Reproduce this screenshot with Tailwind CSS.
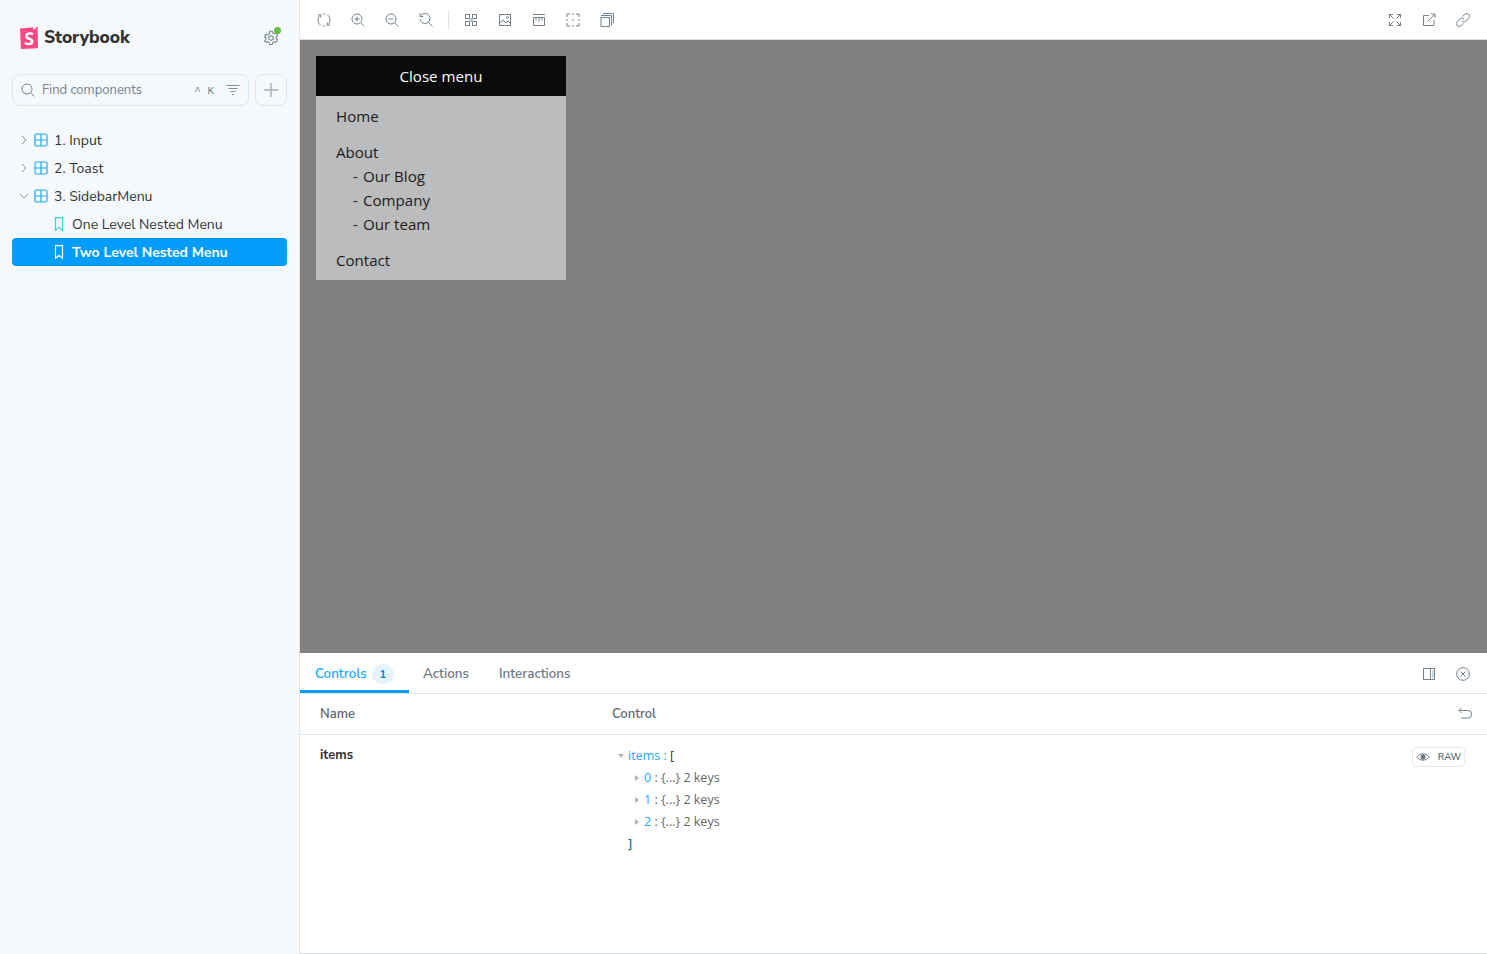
<!DOCTYPE html>
<html lang="en">
<head>
    <meta charset="UTF-8">
    <meta name="viewport" content="width=device-width, initial-scale=1.0">
    <title>Storybook</title>
    <script src="https://cdn.jsdelivr.net/npm/@tailwindcss/browser@4"></script>
</head>
<body class="bg-white">
<div class="flex h-[954px] w-[1487px] overflow-hidden font-['Nunito_Sans','Noto_Sans',sans-serif] text-[13px] text-[#2e3438]">

    <!-- sidebar -->
    <aside class="w-[300px] shrink-0 border-r border-[#e3e8ee] bg-[#f6f9fc] px-3">
        <div class="flex h-[74px] items-center pl-2 pr-1 pt-[1px]">
            <svg class="h-[22px] w-[18px]" viewBox="0 0 18 22"><path fill="#ff4785" d="M0 1.400 17.600 0 18 21.200 0.900 22Z"/><path fill="#fff" d="M13.200 0.200 15.600 0 15.700 2.700 14.400 1.800 13.200 2.800ZM12.700 8.200C12.300 7.900 11.400 7.600 10 7.600 8.600 7.600 7.900 8.200 7.900 9 7.900 11 13.600 10.300 13.600 14.600 13.600 17 11.600 18.300 9 18.300 6.600 18.300 5 17.400 4.400 16.800L5.300 14.700C5.800 15.200 7.400 16 8.800 16 10.100 16 10.800 15.400 10.800 14.600 10.800 12.600 5.100 13.200 5.100 9.200 5.100 6.800 7 5.300 9.700 5.300 11.500 5.300 12.800 5.700 13.400 6.200Z"/></svg>
            <span class="ml-[6px] text-[17.500px] font-extrabold tracking-[-0.1px] text-[#333]">Storybook</span>
            <div class="relative ml-auto mr-[4px]">
                <svg class="h-[16px] w-[16px] text-[#73828c]" viewBox="0 0 14 14" fill="none" stroke="currentColor" stroke-width=".9"><circle cx="7" cy="7" r="2"/><path d="M5.800 1h2.400l.4 1.600 1.300.7 1.600-.5 1.200 2.100-1.200 1.100v1.600l1.200 1.100-1.200 2.100-1.600-.5-1.300.7-.4 1.600H5.800l-.4-1.600-1.300-.7-1.600.5L1.300 9.700l1.200-1.100V7L1.300 5.900l1.200-2.100 1.600.5 1.300-.7z" stroke-linejoin="round"/></svg>
                <span class="absolute -right-[2px] -top-[3px] h-[7px] w-[7px] rounded-full bg-[#66bf3c]"></span>
            </div>
        </div>
        <div class="flex gap-[6px]">
            <div class="flex h-8 w-[237px] items-center rounded-lg border border-[#d9e8f2] pl-2 pr-[8px] text-[#73828c]">
                <svg class="h-[14px] w-[14px]" viewBox="0 0 14 14" fill="none" stroke="currentColor"><circle cx="6" cy="6" r="5"/><path d="m9.600 9.600 3.900 3.900"/></svg>
                <span class="ml-[7px] pt-[2px] text-[13px]">Find components</span>
                <span class="ml-auto pt-[2px] font-['Liberation_Mono',monospace] text-[11px]">^ K</span>
                <svg class="ml-3 h-[14px] w-[14px]" viewBox="0 0 14 14" fill="none" stroke="currentColor" stroke-width=".9"><path d="M.5 2.500h13M2.500 5.500h9M4.500 8.500h5M6 11.500h2"/></svg>
            </div>
            <div class="flex h-8 w-8 items-center justify-center rounded-lg border border-[#d9e8f2] text-[#a4adb3]">
                <svg class="h-[14px] w-[14px]" viewBox="0 0 14 14" fill="none" stroke="currentColor" stroke-width="1.300"><path d="M7 0v14M0 7h14"/></svg>
            </div>
        </div>
        <nav class="mt-5 text-[14px]">
            <div class="flex h-7 items-center pl-[7px]">
                <svg class="h-[10px] w-[10px] text-[#8a959c]" viewBox="0 0 10 10" fill="none" stroke="currentColor"><path d="m3 1 4 4-4 4"/></svg>
                <svg class="ml-[5px] h-[14px] w-[14px] text-[#1ea7fd]" viewBox="0 0 14 14" fill="none" stroke="currentColor" stroke-width="1.200"><rect x="1" y="1" width="12" height="12" rx="1.500"/><path d="M7 1v12M1 7h12"/></svg>
                <span class="ml-[6px] pt-[1px]">1. Input</span>
            </div>
            <div class="flex h-7 items-center pl-[7px]">
                <svg class="h-[10px] w-[10px] text-[#8a959c]" viewBox="0 0 10 10" fill="none" stroke="currentColor"><path d="m3 1 4 4-4 4"/></svg>
                <svg class="ml-[5px] h-[14px] w-[14px] text-[#1ea7fd]" viewBox="0 0 14 14" fill="none" stroke="currentColor" stroke-width="1.200"><rect x="1" y="1" width="12" height="12" rx="1.500"/><path d="M7 1v12M1 7h12"/></svg>
                <span class="ml-[6px] pt-[1px]">2. Toast</span>
            </div>
            <div class="flex h-7 items-center pl-[7px]">
                <svg class="h-[10px] w-[10px] text-[#8a959c]" viewBox="0 0 10 10" fill="none" stroke="currentColor"><path d="m1 3 4 4 4-4"/></svg>
                <svg class="ml-[5px] h-[14px] w-[14px] text-[#1ea7fd]" viewBox="0 0 14 14" fill="none" stroke="currentColor" stroke-width="1.200"><rect x="1" y="1" width="12" height="12" rx="1.500"/><path d="M7 1v12M1 7h12"/></svg>
                <span class="ml-[6px] pt-[1px]">3. SidebarMenu</span>
            </div>
            <div class="flex h-7 items-center pl-[41px]">
                <svg class="h-[14px] w-[12px] text-[#37d5d3]" viewBox="0 0 12 14" fill="none" stroke="currentColor" stroke-width="1.200"><path d="M2.500 .6h7v12.800l-3.500-3-3.500 3z"/></svg>
                <span class="ml-[7px] pt-[1px]">One Level Nested Menu</span>
            </div>
            <div class="flex h-7 items-center rounded-[4px] bg-[#029cfd] pl-[41px] font-bold text-white">
                <svg class="h-[14px] w-[12px]" viewBox="0 0 12 14" fill="none" stroke="currentColor" stroke-width="1.200"><path d="M2.500 .6h7v12.800l-3.500-3-3.500 3z"/></svg>
                <span class="ml-[7px] pt-[1px]">Two Level Nested Menu</span>
            </div>
        </nav>
    </aside>

    <main class="flex min-w-0 flex-1 flex-col">
        <!-- toolbar -->
        <header class="flex h-10 shrink-0 items-center border-b border-[#d9dcdf] pl-[17px] pr-[17px] text-[#73828c]">
            <div class="flex items-center gap-5">
                <svg class="h-[14px] w-[14px]" viewBox="0 0 14 14" fill="none" stroke="currentColor"><path d="M3.200 2.300A6 6 0 0 0 3.500 12M10.800 11.700A6 6 0 0 0 10.500 2"/><path d="M1 1.800h2.700v2.700M13 12.200h-2.700V9.500"/><path d="M5 1.200A6 6 0 0 1 9 1.200M9 12.800A6 6 0 0 1 5 12.800" opacity=".55"/></svg>
                <svg class="h-[14px] w-[14px]" viewBox="0 0 14 14" fill="none" stroke="currentColor"><circle cx="6" cy="6" r="5"/><path d="m9.600 9.600 3.900 3.900M3.500 6h5M6 3.500v5"/></svg>
                <svg class="h-[14px] w-[14px]" viewBox="0 0 14 14" fill="none" stroke="currentColor"><circle cx="6" cy="6" r="5"/><path d="m9.600 9.600 3.900 3.900M3.500 6h5"/></svg>
                <svg class="h-[14px] w-[14px]" viewBox="0 0 14 14" fill="none" stroke="currentColor"><path d="M2 2.500A5 5 0 1 1 1 6"/><path d="M1 .5v3h3M9.600 9.600l3.900 3.900"/></svg>
            </div>
            <div class="ml-[15px] mr-[15px] h-5 w-px bg-[#dfe4e8]"></div>
            <div class="flex items-center gap-5">
                <svg class="h-[14px] w-[14px]" viewBox="0 0 14 14" fill="none" stroke="currentColor"><rect x="1.500" y="1.500" width="4" height="4"/><rect x="8.500" y="1.500" width="4" height="4"/><rect x="1.500" y="8.500" width="4" height="4"/><rect x="8.500" y="8.500" width="4" height="4"/><path d="M5 5h4v4H5z" fill="#b9c2c8" stroke="none"/></svg>
                <svg class="h-[14px] w-[14px]" viewBox="0 0 14 14" fill="none" stroke="currentColor"><rect x="1.500" y="1.500" width="11" height="11"/><path d="m1.500 10.500 3.500-3.500 3 3 2-2 2.500 2.500"/><circle cx="9.500" cy="4.500" r="1"/></svg>
                <svg class="h-[14px] w-[14px]" viewBox="0 0 14 14" fill="none" stroke="currentColor"><path d="M1 1.500h12"/><path d="M1.500 4.500h11v8h-11zM4 4.500v3M7 4.500v4M10 4.500v3"/></svg>
                <svg class="h-[14px] w-[14px]" viewBox="0 0 14 14" fill="none" stroke="currentColor"><path d="M1 4V1h3M6 1h2M10 1h3v3M13 6v2M13 10v3h-3M8 13H6M4 13H1v-3M1 8V6"/><circle cx="7" cy="7" r=".8" fill="currentColor" stroke="none"/></svg>
                <svg class="h-[14px] w-[14px]" viewBox="0 0 14 14" fill="none" stroke="currentColor"><rect x="1" y="4.500" width="8.500" height="9"/><path d="M1 2.500h10.500v10M3 .5h10.500v10"/></svg>
            </div>
            <div class="ml-auto flex items-center gap-5">
                <svg class="h-[14px] w-[14px]" viewBox="0 0 14 14" fill="none" stroke="currentColor"><path d="M1.500 5V1.500H5M1.500 1.500 5.500 5.500M9 1.500h3.500V5M12.500 1.500l-4 4M1.500 9v3.500H5M1.500 12.500l4-4M9 12.500h3.500V9M12.500 12.500l-4-4"/></svg>
                <svg class="h-[14px] w-[14px]" viewBox="0 0 14 14" fill="none" stroke="currentColor"><path d="M7 2.500H1.500v10H12V7M6 8l7-7M9 1h4v4"/></svg>
                <svg class="h-[14px] w-[14px]" viewBox="0 0 14 14" fill="none" stroke="currentColor"><path d="M6.500 3.500 8.800 1.300a2.500 2.500 0 0 1 3.900 3.900L9.800 8.100a2.500 2.500 0 0 1-3.800-.4"/><path d="M7.500 10.500 5.200 12.700a2.500 2.500 0 0 1-3.900-3.900l2.900-2.900a2.500 2.500 0 0 1 3.800.4"/></svg>
            </div>
        </header>

        <!-- preview canvas -->
        <section class="h-[613px] shrink-0 bg-[#808080] p-4 font-['Open_Sans',sans-serif] text-[15.100px] leading-6 text-[#1a1a1a]">
            <div class="w-[250px] bg-[#bbbcbe]">
                <div class="flex h-10 items-center justify-center bg-[#0a0a0a] text-white">Close menu</div>
                <ul class="space-y-3 px-5 py-2">
                    <li>Home</li>
                    <li>
                        About
                        <ul class="pl-[17px]">
                            <li class="flex"><span class="w-[10px]">-</span>Our Blog</li>
                            <li class="flex"><span class="w-[10px]">-</span>Company</li>
                            <li class="flex"><span class="w-[10px]">-</span>Our team</li>
                        </ul>
                    </li>
                    <li>Contact</li>
                </ul>
            </div>
        </section>

        <!-- addons panel -->
        <section class="flex min-h-0 flex-1 flex-col border-b border-[#d9dcdf]">
            <div class="flex h-[41px] shrink-0 items-stretch border-b border-[#e3e8ee] text-[13.400px] font-semibold text-[#6d7a82]">
                <div class="flex w-[109px] items-center border-b-[3px] border-[#029cfd] pl-[15px] pt-[5px] text-[#1ea7fd]">
                    <span>Controls</span>
                    <span class="ml-[5px] flex h-5 w-[22px] items-center justify-center rounded-full bg-[#e3f3ff] pt-[2px] text-[11px] font-bold text-[#1a7fc4]">1</span>
                </div>
                <div class="flex items-center pl-[14px] pt-[2px]">Actions</div>
                <div class="flex items-center pl-[30px] pt-[2px]">Interactions</div>
                <div class="ml-auto flex items-center gap-5 pr-[17px] pt-[1px] text-[#73828c]">
                    <svg class="h-[14px] w-[14px]" viewBox="0 0 14 14" fill="none" stroke="currentColor"><rect x="1.500" y="1.500" width="11" height="11"/><path d="M8.500 1.500v11"/><path d="M10 4h1.500M10 6h1.500M10 8h1.500M10 10h1.500" stroke-width=".8"/></svg>
                    <svg class="h-[14px] w-[14px]" viewBox="0 0 14 14" fill="none" stroke="currentColor"><circle cx="7" cy="7" r="6.300"/><path d="m4.500 4.500 5 5M9.500 4.500l-5 5"/></svg>
                </div>
            </div>
            <div class="grid h-[41px] shrink-0 grid-cols-[292px_1fr_auto] items-center border-b border-[#e3e8ee] pl-5 pr-[15px] font-semibold text-[#5c6870]">
                <span class="pt-[2px]">Name</span>
                <span class="pt-[2px]">Control</span>
                <svg class="h-[14px] w-[14px] text-[#73828c]" viewBox="0 0 14 14" fill="none" stroke="currentColor"><path d="M1.500 3.500h8.500a3 3 0 0 1 0 7.500H3M3.500 1 1 3.500 3.500 6"/></svg>
            </div>
            <div class="grid grid-cols-[292px_1fr_auto] pl-5 pr-[22px]">
                <span class="pt-[11px] font-bold text-[#333]">items</span>
                <div class="pl-[6px] pt-[10px] font-['Open_Sans',sans-serif] text-[12.500px] leading-[22px] text-[#666]">
                    <div class="flex items-center">
                        <span class="h-0 w-0 border-x-[3px] border-t-[4px] border-x-transparent border-t-[#b3b3b3]"></span>
                        <span class="ml-[4px] text-[#1ea7fd]">items</span><span class="whitespace-pre text-[#1ea7fd]"> : </span><span class="text-[#333]">[</span>
                    </div>
                    <div class="flex items-center pl-[17px]">
                        <span class="h-0 w-0 border-y-[3px] border-l-[4px] border-y-transparent border-l-[#b3b3b3]"></span>
                        <span class="ml-[5px] text-[#1ea7fd]">0</span><span class="whitespace-pre"> : {...} 2 keys</span>
                    </div>
                    <div class="flex items-center pl-[17px]">
                        <span class="h-0 w-0 border-y-[3px] border-l-[4px] border-y-transparent border-l-[#b3b3b3]"></span>
                        <span class="ml-[5px] text-[#1ea7fd]">1</span><span class="whitespace-pre"> : {...} 2 keys</span>
                    </div>
                    <div class="flex items-center pl-[17px]">
                        <span class="h-0 w-0 border-y-[3px] border-l-[4px] border-y-transparent border-l-[#b3b3b3]"></span>
                        <span class="ml-[5px] text-[#1ea7fd]">2</span><span class="whitespace-pre"> : {...} 2 keys</span>
                    </div>
                    <div class="pl-[10px] font-semibold text-[#1a6fb0]">]</div>
                </div>
                <div class="mt-3 flex h-5 w-[53px] items-center justify-center gap-[8px] rounded-[4px] border border-[#e3e8ee] text-[#6b777f]">
                    <svg class="h-[14px] w-[14px]" viewBox="0 0 14 14"><path fill="none" stroke="currentColor" d="M.8 7C3.800 2.800 10.200 2.800 13.200 7 10.200 11.200 3.800 11.200.8 7Z"/><circle cx="7" cy="7" r="2.500" fill="currentColor"/></svg>
                    <span class="pt-[1px] text-[9.500px] font-semibold text-[#5c6870]">RAW</span>
                </div>
            </div>
        </section>
    </main>
</div>
</body>
</html>
